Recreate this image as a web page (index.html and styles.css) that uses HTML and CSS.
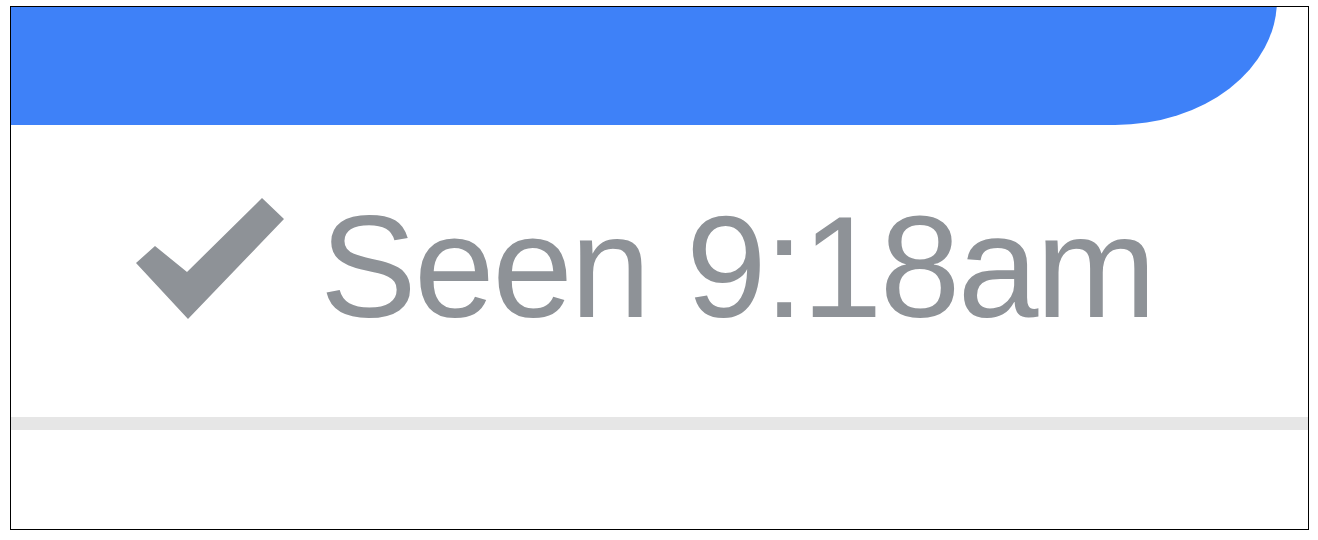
FILE: index.html
```html
<!DOCTYPE html>
<html lang="en">
<head>
  <meta charset="UTF-8">
  <title>Seen receipt</title>
  <link rel="stylesheet" href="styles.css">
</head>
<body>

  <div class="frame">
    <div class="bubble"></div>

    <div class="receipt">
      <svg class="check" width="151" height="123" viewBox="0 0 151 123">
        <polygon points="1,66 20,49 52,75 127,1 149,22 53,122" fill="#8e9297"/>
      </svg>
      <span class="seen">Seen 9:18am</span>
    </div>

    <div class="divider"></div>
  </div>

</body>
</html>
```

FILE: styles.css
```css
body {
  margin: 0;
  background-color: #fff;
  font-family: 'Liberation Sans', Arial, sans-serif;
}

.frame {
  margin: 6px 9px 0 10px;
  height: 522px;
  border: 1px solid #000;
  background-color: #fff;
  overflow: hidden;
}

/* top of the bubble runs past the frame, so only its lower curve shows */
.bubble {
  height: 125px;
  margin: -7px 31px 0 0;
  background-color: #3e81f8;
  border-bottom-right-radius: 162px 125px;
}

.receipt {
  display: flex;
  align-items: flex-start;
  gap: 34px;
  padding: 70px 0 0 124px;
  height: 222px;
}

.check {
  margin-top: 2px;
  flex-shrink: 0;
}

.seen {
  font-size: 145px;
  line-height: 1;
  letter-spacing: -2.6px;
  color: #8e9297;
  white-space: nowrap;
}

.divider {
  height: 13px;
  background-color: #e6e6e6;
}
```
